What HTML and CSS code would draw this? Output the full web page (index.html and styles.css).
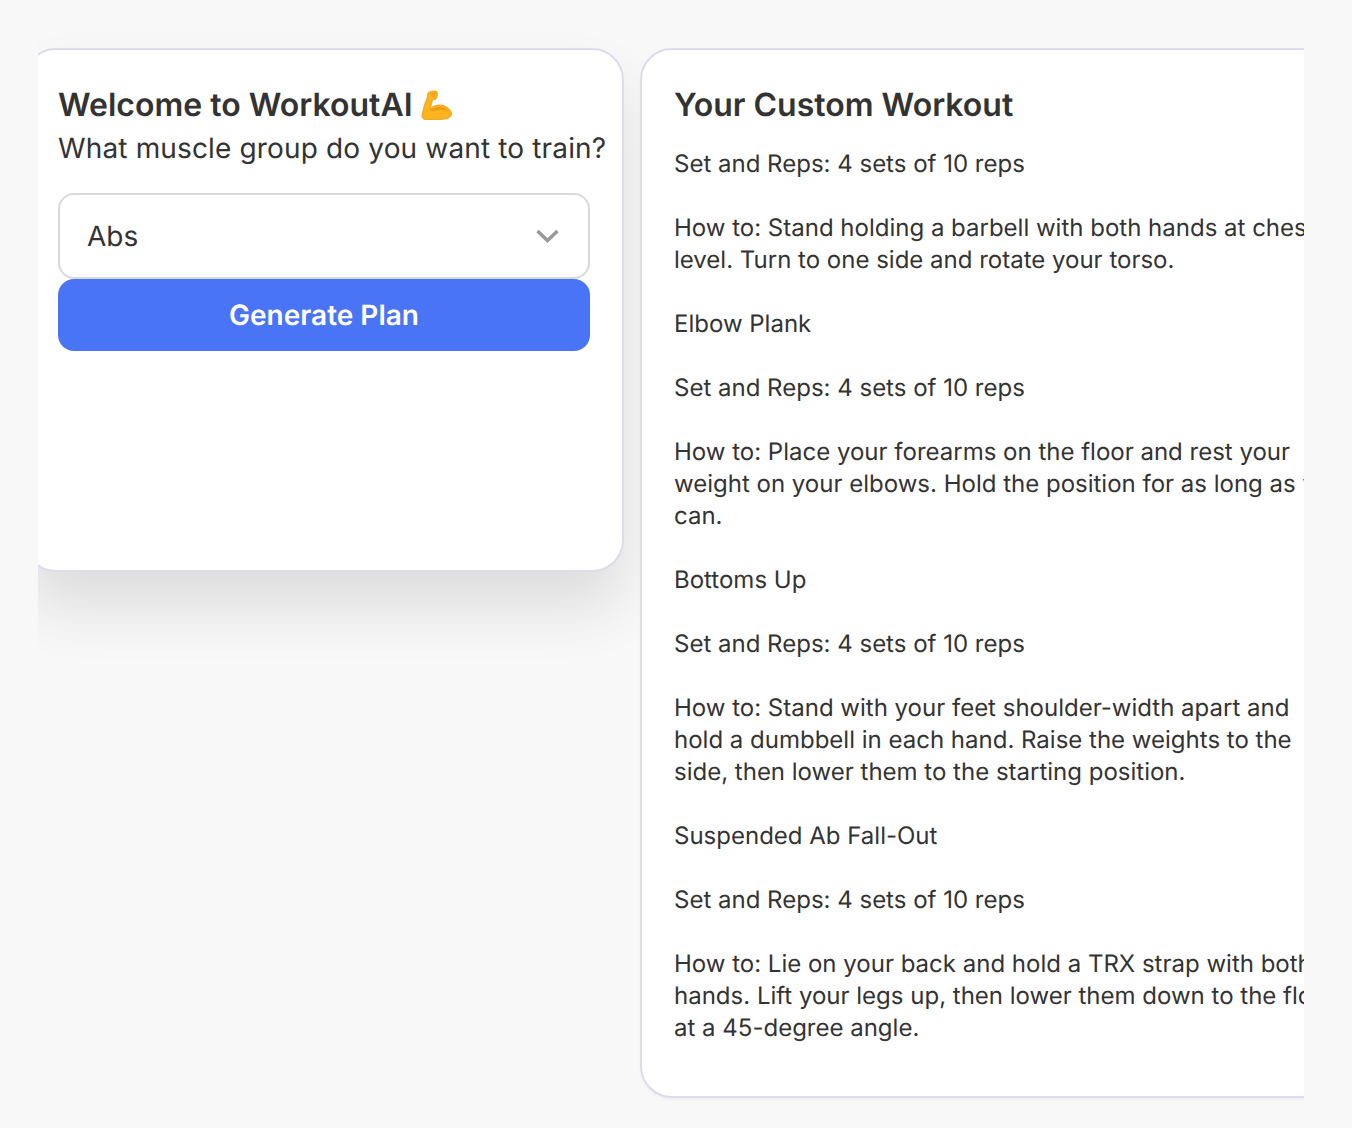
FILE: index.html
```html
<!DOCTYPE html>
<html lang="en">
<head>
<meta charset="utf-8">
<title>WorkoutAI</title>
<link rel="stylesheet" href="styles.css">
</head>
<body>
<main class="frame">
  <section class="card form-card">
    <h1 class="title">Welcome to WorkoutAI <svg class="emoji" viewBox="0 0 31 30" aria-hidden="true"><path d="M7 3C9 1 14 0 16 2c1 2 0 5-1 7l-3.500 1L9 20c2-4 6-5 10-5 6 0 11.500 5 11.500 9 0 4-5.500 5.500-13.500 5.500H5C1.500 29.500.5 27 1 25 2.500 18 4 12 6.500 7 6.200 5 6.500 4 7 3z" fill="#fbb31e" stroke="#ee9a0c" stroke-width=".8"/><path d="M9 21c3-3 7-4.500 11-3.800 3.500.6 6.500 2.700 8 5.300-3-1.800-6-2.800-9-2.600-3.500.2-6.800 1.300-10 1.100z" fill="#ef9b10"/><path d="M9 4.500c2-1.200 4-1.300 5.500-.8-1 .8-1.500 2-1 3.300" fill="none" stroke="#e8930a" stroke-width=".9"/></svg></h1>
    <p class="prompt">What muscle group do you want to train?</p>
    <div class="select">
      <span>Abs</span>
      <svg class="chevron" viewBox="0 0 23 15" aria-hidden="true"><path d="M1.500 2 11.500 11.500 21.500 2" fill="none" stroke="#999" stroke-width="3.500"/></svg>
    </div>
    <button class="generate" type="button">Generate Plan</button>
  </section>
  <section class="card plan-card">
    <h2 class="title">Your Custom Workout</h2>
    <div class="plan">Set and Reps: 4 sets of 10 reps

How to: Stand holding a barbell with both hands at chest level. Turn to one side and rotate your torso.

Elbow Plank

Set and Reps: 4 sets of 10 reps

How to: Place your forearms on the floor and rest your weight on your elbows. Hold the position for as long as you can.

Bottoms Up

Set and Reps: 4 sets of 10 reps

How to: Stand with your feet shoulder-width apart and hold a dumbbell in each hand. Raise the weights to the side, then lower them to the starting position.

Suspended Ab Fall-Out

Set and Reps: 4 sets of 10 reps

How to: Lie on your back and hold a TRX strap with both hands. Lift your legs up, then lower them down to the floor at a 45-degree angle.</div>
  </section>
</main>
</body>
</html>
```
FILE: styles.css
```css
* { box-sizing: border-box; }
html, body { margin: 0; height: 100%; }
body {
  background: #f8f8f8;
  color: #333;
  font-family: Inter, "Liberation Sans", sans-serif;
  text-rendering: geometricPrecision;
  padding: 0 48px 0 38px;
}
.frame {
  display: flex;
  align-items: flex-start;
  gap: 16px;
  height: 1128px;
  padding-top: 48px;
  overflow: hidden;
}
.card {
  flex: none;
  background: #fff;
  border: 2px solid #dddcec;
  border-radius: 32px;
  padding: 36px 32px 32px;
}
.form-card {
  width: 600px;
  height: 524px;
  margin-left: -14px;
  padding-right: 10px;
  box-shadow: 0 36px 60px rgba(0, 0, 0, 0.11);
}
.plan-card {
  width: 739px;
  height: 1050px;
  box-shadow: 0 2px 3px rgba(0, 0, 0, 0.04);
}
.title {
  margin: 0;
  font-size: 32px;
  line-height: 38px;
  font-weight: 600;
}
.emoji {
  width: 31px;
  height: 30px;
  vertical-align: -4px;
}
.prompt {
  margin: 7px 0 28px;
  font-size: 28px;
  line-height: 34px;
  letter-spacing: 0.15px;
}
.select {
  display: flex;
  align-items: center;
  justify-content: space-between;
  width: 532px;
  height: 86px;
  padding: 0 29px 0 27px;
  background: #fff;
  border: 2px solid #d9d9d9;
  border-radius: 16px;
  font-size: 28px;
}
.chevron { width: 23px; height: 15px; }
.generate {
  display: block;
  width: 532px;
  height: 72px;
  padding: 0;
  border: 0;
  border-radius: 16px;
  background: #4a74f6;
  color: #fff;
  font: 600 28px Inter, "Liberation Sans", sans-serif;
  text-rendering: geometricPrecision;
}
.plan {
  margin-top: 24px;
  font-size: 24px;
  line-height: 32px;
  white-space: pre-wrap;
}
```
